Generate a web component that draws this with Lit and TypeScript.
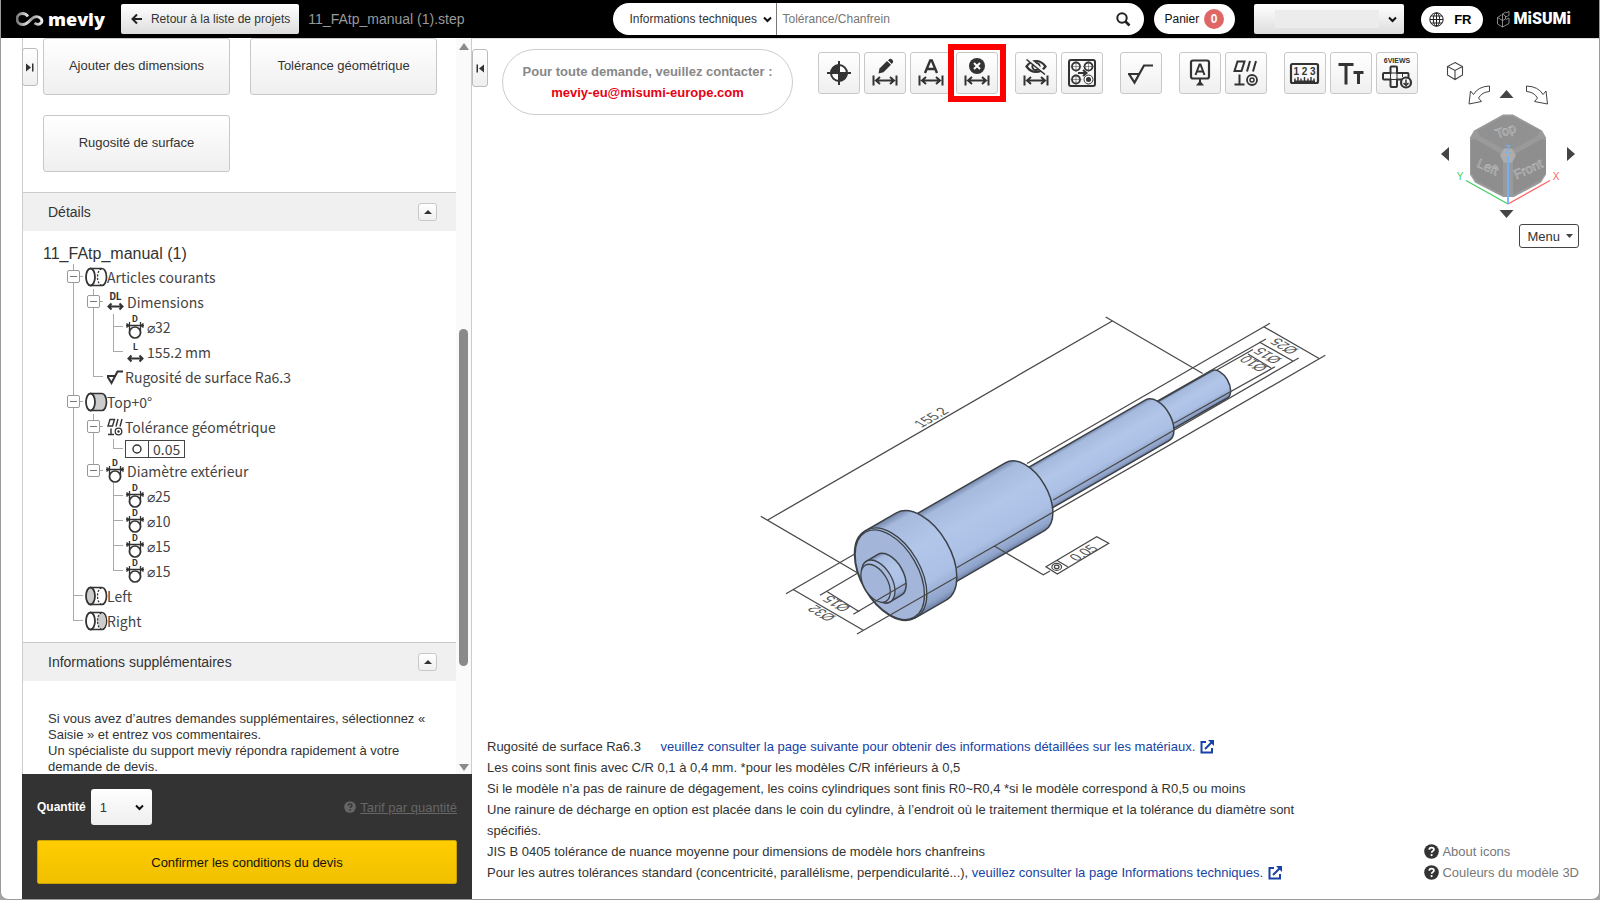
import { LitElement, html, svg, css, nothing } from "lit";
import { customElement } from "lit/decorators.js";

const INK = "#333";

/* ---------- toolbar glyphs, drawn on a 42 x 42 board ---------- */
const span = svg`<path d="M9.5 23.5v10M32.5 23.5v10M12 28.5h18M16 25l-4 3.5 4 3.5M26 25l4 3.5-4 3.5" fill="none" stroke="#333" stroke-width="2"/>`;

const glyphs: Record<string, unknown> = {
  target: svg`<circle cx="21" cy="21" r="8" fill="#fff" stroke="#333" stroke-width="2"/>
    <path d="M21 21V12.5A8.500 8.500 0 0 0 12.500 21zM21 21v8.500A8.500 8.500 0 0 0 29.500 21z" fill="#333"/>
    <path d="M21 9v24M9 21h24" stroke="#333" stroke-width="2"/>`,
  edit: svg`${span}<path d="M14.500 21.500l1-5L23 9l4 3.700-7.500 7.500z" fill="#333"/><path d="M24 8.200l1.500-1.200q1.500-.6 2.800.7t.6 2.700L27.700 12z" fill="#333"/>`,
  letter: svg`${span}<path d="M15 21L20.200 8.500h1.600L27 21M17 17h8" fill="none" stroke="#333" stroke-width="2.400"/>`,
  remove: svg`${span}<circle cx="21" cy="14" r="8" fill="#333"/><path d="M18 11l6 6M24 11l-6 6" stroke="#fff" stroke-width="2"/>`,
  hide: svg`${span}<path d="M11.500 14.500Q15.500 9 21 9t9.500 5.500Q26.500 20 21 20t-9.500-5.500z" fill="none" stroke="#333" stroke-width="2.200"/><circle cx="21" cy="14.500" r="3.600" fill="none" stroke="#333" stroke-width="2"/><path d="M12.500 6l18.500 15.500" stroke="#f7f7f7" stroke-width="2.500"/><path d="M11.500 7.500l18.500 15" stroke="#333" stroke-width="1.600"/>`,
  group: svg`<rect x="8" y="8" width="26" height="26" rx="2" fill="none" stroke="#333" stroke-width="2"/>
    ${[[15, 14.5], [27.5, 14.5], [15, 27.5]].map(([x, y]) => svg`<circle cx=${x} cy=${y} r="4" fill="none" stroke="#333" stroke-width="1.800"/><path d="M${x - 5.5} ${y}h11M${x} ${y - 5.5}v11" stroke="#555" stroke-width=".6"/>`)}
    <circle cx="27.500" cy="27.500" r="4.500" fill="none" stroke="#333"/><circle cx="27.500" cy="27.500" r="2.500" fill="#333"/><path d="M17 21h8M22 18l3.500 3-3.500 3" fill="none" stroke="#333" stroke-width="2"/>`,
  rough: svg`<path d="M8 22h12M9 22l5.500 8.500L24 13.500h9" fill="none" stroke="#333" stroke-width="2.200"/>`,
  datum: svg`<rect x="12" y="8.500" width="18" height="18" rx="2" fill="none" stroke="#333" stroke-width="2.200"/><path d="M16.500 23l4-10.500h1l4 10.500M18 19.500h6M21 27v3" fill="none" stroke="#333" stroke-width="2"/><path d="M21 28.500l4 5h-8z" fill="#333"/>`,
  geo: svg`<path d="M12.500 9.500h7l-3 9.500H9.500zM25 9l-3 10.500M31 9l-3 10.500M14.500 22.500v10M9.500 32.500h10" fill="none" stroke="#333" stroke-width="2"/><circle cx="27" cy="28" r="5" fill="none" stroke="#333" stroke-width="1.800"/><circle cx="27" cy="28" r="2" fill="none" stroke="#333" stroke-width="1.500"/>`,
  ruler: svg`<rect x="7" y="12" width="27" height="19" rx="1.500" fill="none" stroke="#333" stroke-width="2.200"/>
    <text x="20.500" y="23" text-anchor="middle" font-size="10" font-weight="700" fill="#333">1 2 3</text>
    <path d="M11 29v-2.500M14 29v-4M17 29v-2.500M20.500 29v-4M24 29v-2.500M27 29v-4M30 29v-2.500M10 29.300h21" stroke="#333" stroke-width="1.400"/>`,
  text: svg`<path d="M8.500 12.500h15M16 12v20.500M23.500 20.500h10M28.500 20v12" fill="none" stroke="#333" stroke-width="3"/>`,
  views: svg`<text x="21" y="11" text-anchor="middle" font-size="7" font-weight="700" fill="#333">6VIEWS</text>
    <path d="M15.500 14.500h4.500q1 0 1 1V21h10.500q1 0 1 1v4.500q0 1-1 1H21V34q0 1-1 1h-4.500q-1 0-1-1v-6.500H8q-1 0-1-1V22q0-1 1-1h6.500v-5.500q0-1 1-1z" fill="none" stroke="#333" stroke-width="2"/><path d="M14.500 21h6.500v6.500h-6.500zM26.500 21v4" fill="none" stroke="#333" stroke-width="1"/>
    <circle cx="30" cy="30.500" r="5" fill="#f4f4f4" stroke="#333" stroke-width="2.200"/><path d="M30 27.500v5.500M27.500 31l2.500 2.500 2.500-2.500" fill="none" stroke="#333" stroke-width="1.500"/>`,
};

const toolbar: [string, string][][] = [
  [["target", "Origine"], ["edit", "Modifier la cote"], ["letter", "Texte de cote"], ["remove", "Supprimer la cote"]],
  [["hide", "Masquer les cotes"], ["group", "Grouper"]],
  [["rough", "Rugosité"]],
  [["datum", "Référence"], ["geo", "Tolérance géométrique"]],
  [["ruler", "Mesurer"], ["text", "Taille du texte"], ["views", "6 vues"]],
];

/* ---------- tree ---------- */
const cyl = (kind: string) => html`<svg width="22" height="20" viewBox="1 0 22 20">
  <path d="M7 1.500h11a4.500 8.500 0 0 1 0 17H7z" fill=${kind === "top" ? "#ccc" : "#fff"} stroke="#333" stroke-width="1.700"/>
  ${kind === "right" ? svg`<path d="M17 2.500a4 7.500 0 0 0 0 15h1a4 7.500 0 0 0 0-15z" fill="#ccc"/>` : nothing}
  ${kind !== "top" ? svg`<path d="M17.500 2a4 8 0 0 0 0 16" fill="none" stroke="#333" stroke-width="1.300" stroke-dasharray="2 1.500"/>` : nothing}
  <ellipse cx="6.500" cy="10" rx="4.500" ry="8.500" fill=${kind === "left" ? "#ccc" : "#fff"} stroke="#333" stroke-width="1.800"/></svg>`;
const arrowH = svg`<path d="M1.500 14.500h14M4.500 11.500l-3 3 3 3M12.500 11.500l3 3-3 3" fill="none" stroke="#333" stroke-width="2"/>`;
const treeIcons: Record<string, unknown> = {
  all: cyl("all"), top: cyl("top"), left: cyl("left"), right: cyl("right"),
  dl: html`<svg width="22" height="20" viewBox="-2 0 22 20"><text x="8.500" y="8" text-anchor="middle" font-size="10" font-weight="700" fill="#333">DL</text>${arrowH}</svg>`,
  l: html`<svg width="22" height="22" viewBox="-2 -3 22 22"><text x="8.500" y="6" text-anchor="middle" font-size="9" font-weight="700" fill="#333">L</text>${arrowH}</svg>`,
  d: html`<svg width="22" height="24" viewBox="0 0 22 24"><text x="10" y="7" text-anchor="middle" font-size="9" font-weight="700" fill="#333">D</text>
    <path d="M1 10.500h18M4.500 7v12M15.500 7v12M1.500 8.500l2.500 2-2.500 2M18.500 8.500l-2.500 2 2.500 2" fill="none" stroke="#333" stroke-width="1.300"/><circle cx="10" cy="17.500" r="5.500" fill="#fff" stroke="#333" stroke-width="1.700"/></svg>`,
  rough: html`<svg width="18" height="16" viewBox="0 0 18 16"><path d="M1 7h9M1.500 7.500L5.500 14 11.500 2.500H17" fill="none" stroke="#333" stroke-width="2"/></svg>`,
  geo: html`<svg width="18" height="18" viewBox="0 0 18 18"><path d="M4 1.500h4.500L6.500 8H2zM12 1l-2 7.500M16 1l-2 7.500M5 10.500v6M2 16.500h6" fill="none" stroke="#333" stroke-width="1.400"/><circle cx="12.500" cy="13.500" r="3.300" fill="none" stroke="#333" stroke-width="1.300"/><circle cx="12.500" cy="13.500" r="1.200" fill="#333"/></svg>`,
};
/* guides: v = trunk, t = branch, e = last branch, b = box on trunk, k = box on last branch, o = blank */
interface Row { guides: string; icon?: string; label: string; frame?: boolean }
const rows: Row[] = [
  { guides: "b", icon: "all", label: "Articles courants" },
  { guides: "vb", icon: "dl", label: "Dimensions" },
  { guides: "vvt", icon: "d", label: "⌀32" },
  { guides: "vve", icon: "l", label: "155.2 mm" },
  { guides: "ve", icon: "rough", label: "Rugosité de surface Ra6.3" },
  { guides: "b", icon: "top", label: "Top+0°" },
  { guides: "vb", icon: "geo", label: "Tolérance géométrique" },
  { guides: "vve", label: "0.05", frame: true },
  { guides: "vk", icon: "d", label: "Diamètre extérieur" },
  { guides: "vot", icon: "d", label: "⌀25" },
  { guides: "vot", icon: "d", label: "⌀10" },
  { guides: "vot", icon: "d", label: "⌀15" },
  { guides: "voe", icon: "d", label: "⌀15" },
  { guides: "t", icon: "left", label: "Left" },
  { guides: "e", icon: "right", label: "Right" },
];

/* ---------- shaft in isometric view ---------- */
const CX = 0.5, CY = 0.866, FLAT = 0.577;
const barrel = (id: string, x1: number, y1: number, x2: number, y2: number, r: number) => {
  const dx = r * CX, dy = r * CY, rx = r * FLAT;
  return svg`<linearGradient id=${id} gradientUnits="userSpaceOnUse" x1=${x1 - dx} y1=${y1 - dy} x2=${x1 + dx} y2=${y1 + dy}>
      <stop offset="0" stop-color="#7487ab"/><stop offset=".08" stop-color="#a6bade"/><stop offset=".4" stop-color="#b1c6e9"/><stop offset=".75" stop-color="#abc0e4"/><stop offset=".94" stop-color="#8fa3ca"/><stop offset="1" stop-color="#6d7fa3"/></linearGradient>
    <path d="M${x1 - dx} ${y1 - dy}L${x2 - dx} ${y2 - dy}A${rx} ${r} -30 0 1 ${x2 + dx} ${y2 + dy}L${x1 + dx} ${y1 + dy}A${rx} ${r} -30 0 1 ${x1 - dx} ${y1 - dy}Z" fill="url(#${id})" stroke="#3c4148" stroke-width="1.500"/>`;
};
const disc = (x: number, y: number, r: number, fill: string) =>
  svg`<ellipse rx=${r * FLAT} ry=${r} transform="translate(${x} ${y}) rotate(-30)" fill=${fill} stroke="#3c4148" stroke-width="1.300"/>`;
const mark = (x: number, y: number, angle: number, skew: number, label: string) =>
  svg`<text transform="translate(${x} ${y}) rotate(${angle}) skewX(${skew})" y="5" text-anchor="middle" font-size="13" fill="#555">${label}</text>`;

const shaft = svg`<svg class="shaft" viewBox="735 290 600 370" role="img" aria-label="Modèle 3D">
  <path class="dim" d="M1105.700 317L1202.700 373.500M1027 463.500L1270 323.300M1156 401.700L1266 339M1216.700 370L1253 349.500"/>
  ${barrel("g10", 1157, 420, 1219.6, 384.4, 15.7)}
  ${barrel("g15", 1025, 496.500, 1157.4, 420.3, 23.5)}
  ${barrel("g25", 921.5, 556.4, 1025.3, 496.5, 39.2)}
  ${barrel("g32", 889.8, 574.7, 921.5, 556.4, 50.2)}
  ${disc(891.5, 573.7, 50, "#a9bce0")}
  ${disc(889.8, 574.7, 49, "#a3b6d9")}
  ${barrel("gb", 878.4, 581.5, 889.6, 574.8, 23.5)}
  ${disc(878.4, 581.5, 23.5, "#a9bce0")}
  ${disc(875.6, 583.3, 20.8, "#a3b6d9")}
  <path class="dim" d="M760.700 516.300L857.300 572.700M767.700 520L1112.300 321
    M786 593.700L854.300 554.300M792.700 589.300L863.300 630.300M857 634L957 576.700
    M820 595.300L858.300 572.700M827.300 591.700L859.300 611.700M853.300 614.300L906 583.300
    M956.700 567.700L1325.300 355.300M1263.700 326.700L1318.700 358.300
    M1053.300 500L1298.700 358M1259.300 342L1293.300 361.300
    M1174 423.300L1275 366.700M1248 354L1271 368
    M994.300 546L1043.300 574.700L1050 571
    M1046 566.700L1096.700 536.700L1108.700 543.300L1057.300 574ZM1056.700 560.300L1067.700 566.700"/>
  <g transform="translate(1056.700 566.900)" fill="none" stroke="#444" stroke-width="1.200"><ellipse rx="4.800" ry="3.500"/><ellipse rx="2.300" ry="1.700"/></g>
  ${mark(930.7, 417, -30, 30, "155.2")}
  ${mark(1083, 552.5, -30, 30, "0.05")}
  ${mark(836, 604, 210, -30, "Ø15")}
  ${mark(821, 613.5, 210, -30, "Ø32")}
  ${mark(1283.5, 346.5, 210, -30, "Ø25")}
  ${mark(1267, 356, 210, -30, "Ø15")}
  ${mark(1253, 364, 210, -30, "Ø10")}
</svg>`;

const chevron = html`<svg class="chev" width="9" height="7" viewBox="0 0 9 7" aria-hidden="true"><path d="M1 1.500l3.500 3.500L8 1.500" fill="none" stroke="#111" stroke-width="2"/></svg>`;
const external = html`<svg class="ext" width="14" height="14" viewBox="0 0 14 14" aria-hidden="true"><path d="M6 2H1.500v10.500H12V8M5 9l7-7" fill="none" stroke="#1643a5" stroke-width="2"/><path d="M8 0h6v6z" fill="#1643a5"/></svg>`;
const help = (size: number, fill: string, mark: string) => html`<svg width=${size} height=${size} viewBox="0 0 15 15" aria-hidden="true"><circle cx="7.500" cy="7.500" r="7.300" fill=${fill}/><path d="M5.300 5.800q0-2.200 2.300-2.200t2.300 1.900q0 1.100-1.300 1.700-.9.500-.9 1.600" fill="none" stroke=${mark} stroke-width="1.800"/><circle cx="7.600" cy="11.100" r="1.100" fill=${mark}/></svg>`;

@customElement("app-root")
export class AppRoot extends LitElement {
  static styles = css`
    :host { display: block; font-family: "Liberation Sans", Arial, sans-serif; font-size: 13px; color: #333; background: #a5a5a5; }
    * { box-sizing: border-box; }
    button, select, input { font: inherit; color: inherit; margin: 0; }
    button { cursor: pointer; padding: 0; }
    svg { display: block; flex: none; }
    a { color: inherit; }
    .window { height: 100vh; display: flex; flex-direction: column; background: #fff; border: 1px solid #999; border-top: 0; border-radius: 0 0 8px 8px; overflow: hidden; }
    .soft { border: 1px solid #c8c8c8; border-radius: 3px; background: linear-gradient(#fff, #efefef); }

    .top { height: 38px; flex: none; display: flex; align-items: center; background: #000; padding: 0 28px 0 15px; font-size: 12px; }
    .brand { display: flex; align-items: center; gap: 4px; color: #fff; font: 800 18px/24px "Open Sans", sans-serif; text-decoration: none; }
    .back { display: flex; align-items: center; gap: 8px; height: 30px; margin-left: 16px; padding: 0 9px 0 10px; border: 0; border-radius: 2px; background: linear-gradient(#fff, #ddd); white-space: nowrap; }
    .file { margin-left: 9px; font-size: 14px; color: #999; white-space: nowrap; }
    .search { display: flex; flex: 0 1 531px; height: 32px; margin-left: auto; background: #fff; border-radius: 16px; overflow: hidden; }
    .pick { display: grid; align-items: center; }
    .pick select { grid-area: 1 / 1; appearance: none; width: 100%; height: 100%; border: 0; background: transparent; }
    .chev { grid-area: 1 / 1; justify-self: end; pointer-events: none; }
    .scope { width: 164px; border-right: 1px solid #777; padding-right: 4px; }
    .scope select { padding-left: 16px; }
    .search input { flex: 1; min-width: 0; border: 0; outline: 0; padding: 0 5px; }
    .search input::placeholder { color: #757575; }
    .go { width: 41px; border: 0; background: none; display: grid; place-items: center; }
    .cart { display: flex; align-items: center; gap: 5px; height: 30px; margin-left: 10px; padding: 0 11px 0 10px; border: 0; border-radius: 15px; background: #fff; color: #111; }
    .count { width: 20px; height: 20px; border-radius: 10px; background: #e06666; color: #fff; font-weight: 700; line-height: 20px; }
    .account { width: 150px; height: 30px; margin-left: 19px; border-radius: 2px; background: linear-gradient(#fff, #ddd); padding-right: 7px; }
    .mask { grid-area: 1 / 1; width: 104px; height: 18px; margin-left: 21px; background: #ececec; pointer-events: none; }
    .lang { display: flex; align-items: center; gap: 10px; height: 27px; margin: 0 14px 0 17px; padding: 0 11px 0 8px; border: 0; border-radius: 14px; background: #fff; color: #000; font-weight: 700; font-size: 13px; }
    .misumi { display: flex; align-items: center; gap: 4px; color: #fff; font: 900 16px/20px Roboto, sans-serif; text-decoration: none; }

    .main { flex: 1; min-height: 0; display: flex; padding-left: 21px; }
    .side { position: relative; width: 450px; flex: none; display: flex; flex-direction: column; border-left: 1px solid #ccc; border-right: 1px solid #ccc; }
    .tab { position: absolute; top: 10px; width: 16px; height: 38px; display: grid; place-items: center; border: 1px solid #bbb; border-radius: 3px; }
    .left { left: -1px; }
    .right { left: 0; }
    .scroller { flex: 1; min-height: 0; display: flex; }
    .content { flex: 1; min-width: 0; overflow: hidden; }
    .rail { width: 15px; display: flex; flex-direction: column; align-items: center; padding: 5px 0 3px; background: #fafafa; }
    .thumb { width: 9px; flex: 336; border-radius: 5px; background: #8a8a8a; }
    .pre { flex: 279; } .post { flex: 98; }
    .cards { display: grid; grid-template-columns: 1fr 1fr; gap: 20px; padding: 0 19px 20px 20px; }
    .card { height: 57px; font-size: 13px; padding-bottom: 2px; }
    .head { display: flex; align-items: center; justify-content: space-between; height: 39px; padding: 0 19px 0 25px; border-top: 1px solid #ccc; background: #f0f0f0; }
    .head h2 { margin: 0; font-size: 14px; font-weight: 400; line-height: 20px; }
    .fold { width: 19px; height: 18px; display: grid; place-items: center; }
    .tree { padding: 13px 0 9px 20px; }
    .tree h3 { margin: 0; font-size: 16px; font-weight: 400; line-height: 20px; }
    .rows { list-style: none; margin: 0; padding: 0 0 0 20px; font: 14px/24px "Noto Sans CJK JP", "Noto Sans CJK SC", sans-serif; color: #444; }
    .row { display: flex; align-items: center; height: 25px; }
    .row svg { overflow: visible; font-family: Roboto, sans-serif; }
    .row.framed { height: 19px; }
    .g { width: 20px; align-self: stretch; display: grid; place-items: center; --c: linear-gradient(#aaa, #aaa); background-repeat: no-repeat; }
    .g.v { background-image: var(--c); background-size: 1px 100%; background-position: 10px 0; }
    .g.t, .g.b { background-image: var(--c), var(--c); background-size: 1px 100%, 10px 1px; background-position: 10px 0, 10px 50%; }
    .g.e, .g.k { background-image: var(--c), var(--c); background-size: 1px 50%, 10px 1px; background-position: 10px 0, 10px 50%; }
    .box { width: 13px; height: 13px; display: grid; place-items: center; border: 1px solid #999; border-radius: 2px; background: #fff; }
    .box::before { content: ""; width: 7px; height: 1px; background: #777; }
    .ico { display: grid; place-items: center; margin-left: 2px; min-width: 20px; height: 24px; }
    .lab { white-space: pre; }
    .frame { display: flex; align-items: center; height: 18px; margin-left: 2px; border: 1px solid #444; line-height: 18px; }
    .frame svg { margin: 0 6px; }
    .frame span { border-left: 1px solid #444; padding: 0 4px; }
    .info { margin: 0; padding: 30px 20px 0 25px; line-height: 16px; }
    .order { flex: none; margin: 0 -1px; padding: 15px; display: grid; gap: 15px; background: #333; color: #fff; }
    .qty { display: flex; align-items: center; gap: 5px; }
    .qty label { font-weight: 700; font-size: 12px; }
    .num { width: 61px; height: 36px; border-radius: 3px; padding-right: 8px; background: linear-gradient(#fff, #eee); color: #333; }
    .num select { padding-left: 9px; }
    .tarif { margin-left: auto; display: flex; align-items: center; gap: 4px; color: #666; }
    .confirm { height: 44px; border: 1px solid #c9a200; border-radius: 2px; background: linear-gradient(#ffcd00, #f0c000); color: #111; }

    .viewer { position: relative; flex: 1; min-width: 0; display: flex; flex-direction: column; border-top: 1px solid #ddd; }
    .bar { display: flex; align-items: flex-start; padding: 10px 0 0 30px; }
    .contact { width: 291px; height: 66px; display: grid; align-content: center; gap: 1px; text-align: center; border: 1px solid #ccc; border-radius: 33px; font-weight: 700; line-height: 20px; color: #888; }
    .contact a { color: #e60012; text-decoration: none; }
    .tools { display: flex; gap: 17px; margin: 3px 0 0 25px; }
    .set { display: flex; gap: 4px; }
    .tool { position: relative; width: 42px; height: 42px; }
    .tool svg { margin: -1px; }
    .focus { position: absolute; inset: -9px; border: 6px solid #f00; z-index: 1; pointer-events: none; }
    .stage { flex: 1; min-height: 0; display: flex; align-items: flex-end; justify-content: center; padding-right: 1px; }
    .shaft { width: 600px; max-width: 100%; height: 370px; }
    .dim { fill: none; stroke: #4a4a4a; stroke-width: 1.300; }
    .bottom { display: flex; align-items: flex-end; justify-content: space-between; padding: 76px 20px 16px 15px; line-height: 21px; }
    .notes { max-width: 840px; }
    .notes p { margin: 0; }
    .notes a { color: #1643a5; text-decoration: none; }
    .notes .far { margin-left: 16px; }
    .ext { display: inline-block; vertical-align: -3px; margin-left: 1px; }
    .helps { display: grid; color: #777; }
    .helps a { display: flex; align-items: center; gap: 3px; text-decoration: none; }
    .nav { position: absolute; top: 13px; right: 11px; width: 160px; display: grid; justify-items: end; gap: 6px; }
    .menu { display: flex; align-items: center; gap: 6px; margin-right: 9px; height: 24px; padding: 0 5px 0 7px; border: 1px solid #444; border-radius: 3px; background: #fff; }
  `;

  private tab(side: string, d: string, name: string) {
    return html`<button class="tab soft ${side}" aria-label=${name}><svg width="8" height="9" viewBox="0 0 8 9"><path d=${d} fill=${INK}/></svg></button>`;
  }

  private section(title: string) {
    return html`<div class="head"><h2>${title}</h2><button class="fold soft" aria-label="Replier ${title}"><svg width="8" height="4" viewBox="0 0 8 4"><path d="M4 0l4 4H0z" fill=${INK}/></svg></button></div>`;
  }

  private row(r: Row) {
    return html`<li class="row ${r.frame ? "framed" : ""}">
      ${[...r.guides].map((g) => html`<span class="g ${g}">${g === "b" || g === "k" ? html`<span class="box"></span>` : nothing}</span>`)}
      ${r.frame
        ? html`<span class="frame"><svg width="10" height="10" viewBox="0 0 10 10"><circle cx="5" cy="5" r="4" fill="none" stroke="#333" stroke-width="1.400"/></svg><span>${r.label}</span></span>`
        : html`<span class="ico">${treeIcons[r.icon!]}</span><span class="lab">${r.label}</span>`}
    </li>`;
  }

  private header() {
    return html`<header class="top">
      <a class="brand" href="#"><svg width="28" height="15" viewBox="0 0 28 15"><defs><linearGradient id="mv"><stop offset="0" stop-color="#777"/><stop offset=".4" stop-color="#ddd"/><stop offset=".6" stop-color="#999"/><stop offset="1" stop-color="#eee"/></linearGradient></defs><path d="M12 4.500Q10 1.500 6.500 1.500a5.500 5.500 0 0 0 0 11q4 0 8-4.500t8-3q4.500 2 3 5.500-3 3.500-7 .5" fill="none" stroke="url(#mv)" stroke-width="2.800"/></svg>meviy</a>
      <button class="back"><svg width="12" height="12" viewBox="0 0 12 12"><path d="M1.500 6H11M6 1.500L1.500 6 6 10.500" fill="none" stroke="#222" stroke-width="2"/></svg>Retour à la liste de projets</button>
      <span class="file">11_FAtp_manual (1).step</span>
      <form class="search" role="search">
        <div class="pick scope"><select aria-label="Rubrique"><option>Informations techniques</option></select>${chevron}</div>
        <input type="text" aria-label="Rechercher" placeholder="Tolérance/Chanfrein">
        <button class="go" type="button" aria-label="Rechercher"><svg width="15" height="15" viewBox="0 0 15 15"><circle cx="6" cy="6" r="4.700" fill="none" stroke="#222" stroke-width="2"/><path d="M9.500 9.500l4 4" stroke="#222" stroke-width="2.600"/></svg></button>
      </form>
      <button class="cart">Panier <span class="count">0</span></button>
      <div class="pick account"><select aria-label="Compte"><option></option></select><span class="mask"></span>${chevron}</div>
      <button class="lang"><svg width="15" height="15" viewBox="0 0 15 15"><g fill="none" stroke="#222"><circle cx="7.500" cy="7.500" r="6.700"/><ellipse cx="7.500" cy="7.500" rx="3.200" ry="6.700"/><path d="M7.500 1v13M1 7.500h13M2 4h11M2 11h11"/></g></svg>FR</button>
      <a class="misumi" href="#"><svg width="13" height="17" viewBox="0 0 13 17"><path d="M.5 6.500l5 3v6.500l-5-3zM5.500 9.500l3-1.500v-3l-3-2v6.500M.5 6.500l4-2.500M8.500 2l3.500-1.500v4L8.500 6M5.500 16l6.500-3.500V7l-3 1.500M5.500 3l3-2" fill="none" stroke="#aaa" stroke-width=".8"/></svg>MiSUMi</a>
    </header>`;
  }

  private sidebar() {
    return html`<aside class="side">
      <div class="scroller">
        <div class="content">
          <div class="cards">
            <button class="card soft">Ajouter des dimensions</button>
            <button class="card soft">Tolérance géométrique</button>
            <button class="card soft">Rugosité de surface</button>
          </div>
          ${this.section("Détails")}
          <div class="tree"><h3>11_FAtp_manual (1)</h3><ul class="rows">${rows.map((r) => this.row(r))}</ul></div>
          ${this.section("Informations supplémentaires")}
          <p class="info">Si vous avez d’autres demandes supplémentaires, sélectionnez « Saisie » et entrez vos commentaires.<br>Un spécialiste du support meviy répondra rapidement à votre demande de devis.</p>
        </div>
        <div class="rail" aria-hidden="true">
          <svg width="10" height="7" viewBox="0 0 10 7"><path d="M5 0l5 7H0z" fill="#8a8a8a"/></svg>
          <span class="pre"></span><span class="thumb"></span><span class="post"></span>
          <svg width="10" height="7" viewBox="0 0 10 7"><path d="M5 7l5-7H0z" fill="#8a8a8a"/></svg>
        </div>
      </div>
      <div class="order">
        <div class="qty"><label for="qty">Quantité</label>
          <div class="pick num"><select id="qty"><option>1</option></select>${chevron}</div>
          <a class="tarif" href="#">${help(12, "#666", "#333")}Tarif par quantité</a></div>
        <button class="confirm">Confirmer les conditions du devis</button>
      </div>
      ${this.tab("left", "M0 .5L5 4.500 0 8.500zM6 .5h1.500v8H6z", "Déplier le volet")}
    </aside>`;
  }

  private cube() {
    return html`<svg width="160" height="166" viewBox="1428 52 160 166" role="img" aria-label="Cube de vue">
      <path d="M1455 62.500l7.500 4v8.500l-7.500 4.500-7.500-4.500v-8.500zM1447.500 66.500l7.500 4 7.500-4M1455 70.500v9" fill="none" stroke="#444" stroke-width="1.100"/>
      <path d="M1489.500 86v5.500q-7.500.5-11 6.500l3 3.500-12.500 2.500 1.500-13 3 3.500q4.500-8 16-8.500z" fill="#fff" stroke="#444"/>
      <path d="M1526.500 86v5.500q7.500.5 11 6.500l-3 3.500 13 2.500-1.500-13-3 3.500q-4.500-8-16.500-8.500z" fill="#fff" stroke="#444"/>
      <path d="M1506.500 90l7 8h-14zM1506.500 218l7-8h-14zM1441 154l8-7v14zM1575 154l-8-7v14z" fill="#444"/>
      <path d="M1503 114.500h10l29 16 4 7v37l-5 8-27 14.500h-11l-28-14.500-5-8v-37l4-7z" fill="#9a9a9a"/>
      <path d="M1477 131l26-14.500h10l27 14.500-3 5-24 13.500h-9l-24-13.500z" fill="#919191"/>
      <path d="M1471 140l4-1 28 16v40l-27-14.500-5-8zM1546 140l-4-1-29 16v40l27-14.500 6-8z" fill="#8e8e8e"/>
      <path d="M1504 148.500h8l4 7-4 7h-8l-4-7z" fill="#adadad"/>
      <path d="M1508 204l-42-23.500" stroke="#4ad06a" stroke-width="1.400"/><path d="M1508 204l42-23.500" stroke="#ff6464" stroke-width="1.400"/><path d="M1508 204v-48" stroke="#6fb3ff" stroke-width="1.800"/>
      <g text-anchor="middle" font-size="13" fill="#8a8a8a" stroke="#c4c4c4" stroke-width=".5">
        <text transform="translate(1507 135) rotate(-20)">Top</text><text transform="translate(1486 171) rotate(24)">Left</text><text transform="translate(1530 173) rotate(-24)">Front</text></g>
      <g text-anchor="middle" font-size="10"><text x="1508" y="153" fill="#6fb3ff">Z</text><text x="1460" y="180" fill="#4ad06a">Y</text><text x="1556" y="180" fill="#ff6464">X</text></g>
    </svg>`;
  }

  private viewer() {
    return html`<main class="viewer">
      <div class="bar">
        <div class="contact"><span>Pour toute demande, veuillez contacter :</span><a href="mailto:meviy-eu@misumi-europe.com">meviy-eu@misumi-europe.com</a></div>
        <div class="tools">${toolbar.map((set) => html`<div class="set">${set.map(([key, name]) => html`<button class="tool soft" aria-label=${name}><svg width="42" height="42" viewBox="0 0 42 42">${glyphs[key]}</svg>${key === "remove" ? html`<span class="focus"></span>` : nothing}</button>`)}</div>`)}</div>
      </div>
      <div class="stage">${shaft}</div>
      <div class="bottom">
        <div class="notes">
          <p>Rugosité de surface Ra6.3 <a class="far" href="#">veuillez consulter la page suivante pour obtenir des informations détaillées sur les matériaux. ${external}</a></p>
          <p>Les coins sont finis avec C/R 0,1 à 0,4 mm. *pour les modèles C/R inférieurs à 0,5</p>
          <p>Si le modèle n’a pas de rainure de dégagement, les coins cylindriques sont finis R0~R0,4 *si le modèle correspond à R0,5 ou moins</p>
          <p>Une rainure de décharge en option est placée dans le coin du cylindre, à l’endroit où le traitement thermique et la tolérance du diamètre sont spécifiés.</p>
          <p>JIS B 0405 tolérance de nuance moyenne pour dimensions de modèle hors chanfreins</p>
          <p>Pour les autres tolérances standard (concentricité, parallélisme, perpendicularité...), <a href="#">veuillez consulter la page Informations techniques. ${external}</a></p>
        </div>
        <div class="helps"><a href="#">${help(15, "#333", "#fff")}About icons</a><a href="#">${help(15, "#333", "#fff")}Couleurs du modèle 3D</a></div>
      </div>
      ${this.tab("right", "M8 .5L3 4.500l5 4zM.5 .5H2v8H.5z", "Replier le volet")}
      <div class="nav">${this.cube()}<button class="menu">Menu <svg width="7" height="4" viewBox="0 0 7 4"><path d="M0 0h7L3.500 4z" fill="#444"/></svg></button></div>
    </main>`;
  }

  render() {
    return html`<div class="window">${this.header()}<div class="main">${this.sidebar()}${this.viewer()}</div></div>`;
  }
}
